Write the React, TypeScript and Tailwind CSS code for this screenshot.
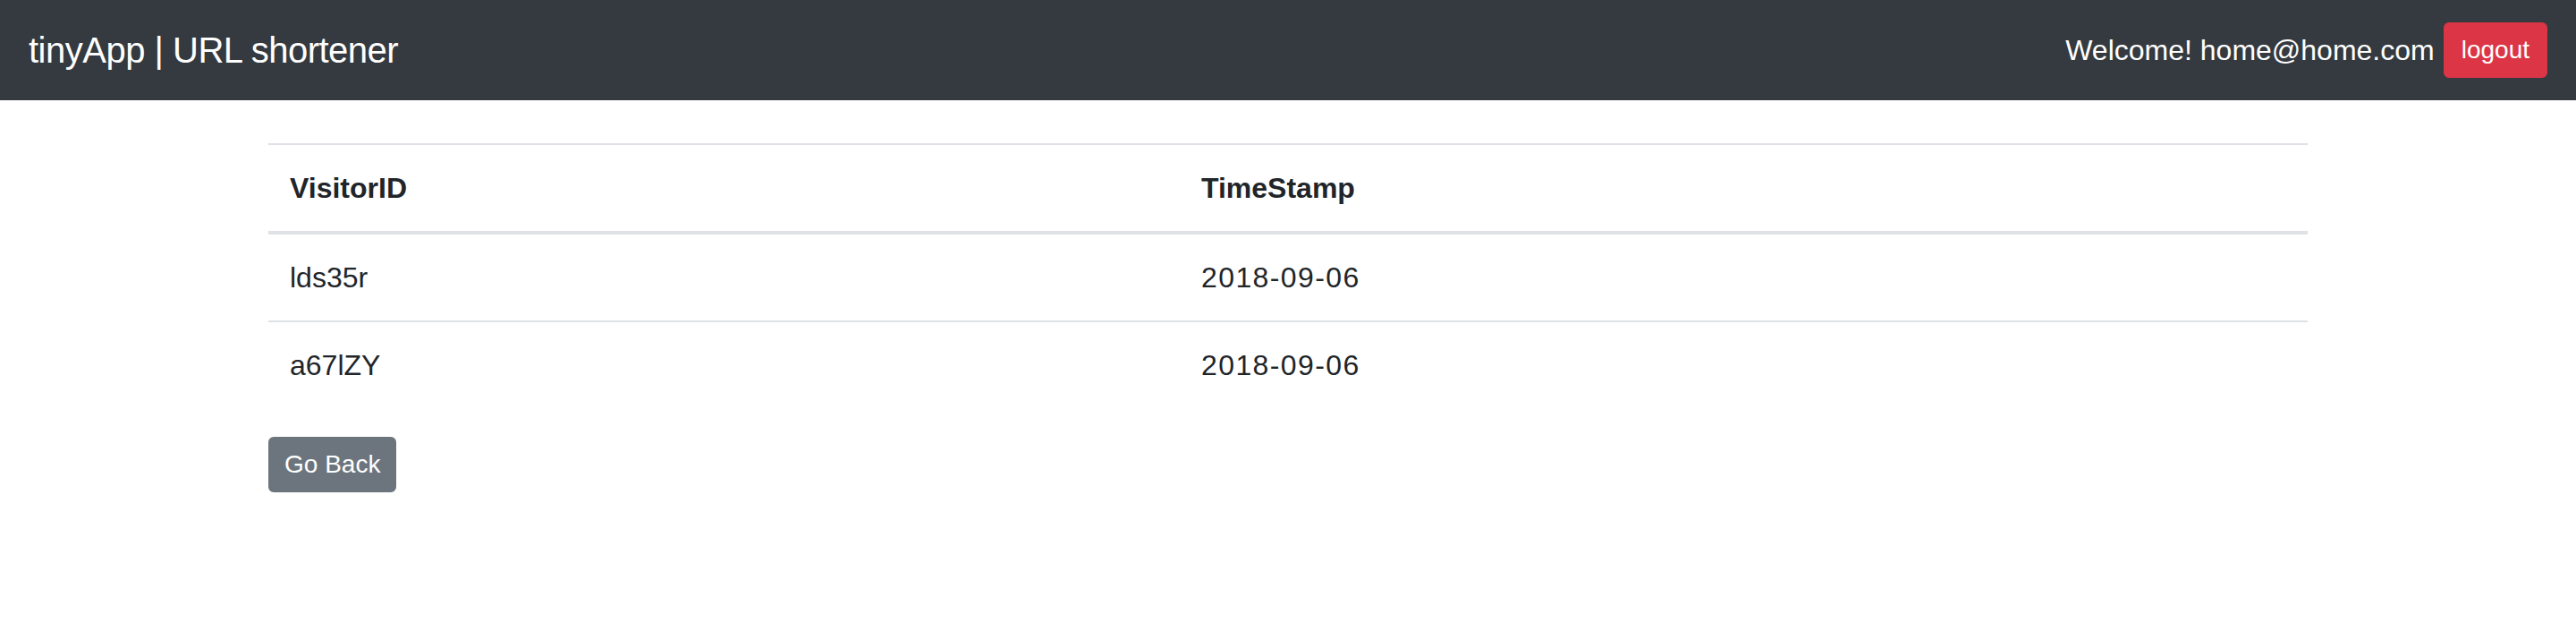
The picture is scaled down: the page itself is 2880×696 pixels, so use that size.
export default function App() {
  const rows = [
    { id: "lds35r", ts: "2018-09-06" },
    { id: "a67lZY", ts: "2018-09-06" },
  ];
  return (
    <div className="min-h-screen bg-white text-[#212529]" style={{ fontFamily: '"Liberation Sans", Arial, sans-serif' }}>
      <nav className="flex h-[112px] items-center justify-between bg-[#343a40] px-[32px]">
        <span className="text-[40px] leading-[60px] tracking-[-0.5px] text-white">tinyApp | URL shortener</span>
        <div className="flex items-center gap-[10px]">
          <span className="text-[32px] leading-[48px] text-white">Welcome! home@home.com</span>
          <button className="rounded-[6px] border-2 border-[#dc3545] bg-[#dc3545] px-[18px] py-[8px] text-[28px] leading-[42px] text-white">
            logout
          </button>
        </div>
      </nav>
      <div className="mx-auto mt-[48px] w-[2280px]">
        <table className="mb-[32px] w-full border-collapse text-[32px] leading-[48px]">
          <thead>
            <tr>
              <th className="w-[1019px] border-t-2 border-b-4 border-[#dee2e6] p-[24px] text-left font-bold">VisitorID</th>
              <th className="border-t-2 border-b-4 border-[#dee2e6] p-[24px] text-left font-bold">TimeStamp</th>
            </tr>
          </thead>
          <tbody>
            {rows.map((r) => (
              <tr key={r.id}>
                <td className="border-t-2 border-[#dee2e6] p-[24px]">{r.id}</td>
                <td className="border-t-2 border-[#dee2e6] p-[24px] tracking-[1.4px]">{r.ts}</td>
              </tr>
            ))}
          </tbody>
        </table>
        <button className="rounded-[6px] border-2 border-[#6c757d] bg-[#6c757d] px-[16px] py-[8px] text-[28px] leading-[42px] text-white">
          Go Back
        </button>
      </div>
    </div>
  );
}
